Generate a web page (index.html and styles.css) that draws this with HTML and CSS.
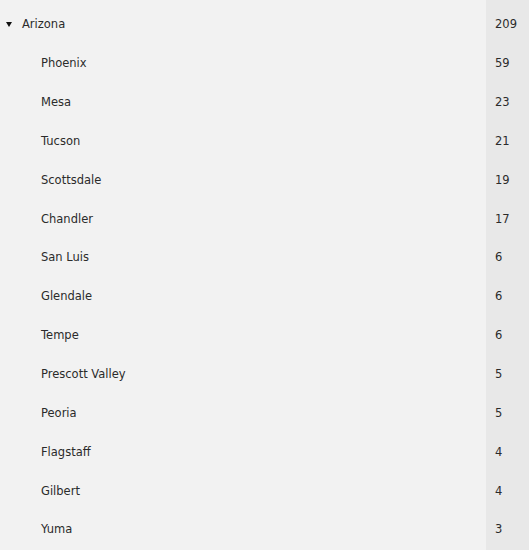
FILE: index.html
```html
<!DOCTYPE html>
<html>
<head>
<meta charset="utf-8">
<link rel="stylesheet" href="styles.css">
</head>
<body>
<div class="list">
  <div class="row state">
    <div class="name"><span class="caret"></span>Arizona</div>
    <div class="count">209</div>
  </div>
  <div class="row city"><div class="name">Phoenix</div><div class="count">59</div></div>
  <div class="row city"><div class="name">Mesa</div><div class="count">23</div></div>
  <div class="row city"><div class="name">Tucson</div><div class="count">21</div></div>
  <div class="row city"><div class="name">Scottsdale</div><div class="count">19</div></div>
  <div class="row city"><div class="name">Chandler</div><div class="count">17</div></div>
  <div class="row city"><div class="name">San Luis</div><div class="count">6</div></div>
  <div class="row city"><div class="name">Glendale</div><div class="count">6</div></div>
  <div class="row city"><div class="name">Tempe</div><div class="count">6</div></div>
  <div class="row city"><div class="name">Prescott Valley</div><div class="count">5</div></div>
  <div class="row city"><div class="name">Peoria</div><div class="count">5</div></div>
  <div class="row city"><div class="name">Flagstaff</div><div class="count">4</div></div>
  <div class="row city"><div class="name">Gilbert</div><div class="count">4</div></div>
  <div class="row city"><div class="name">Yuma</div><div class="count">3</div></div>
</div>
</body>
</html>
```
FILE: styles.css
```css
html, body {
  margin: 0;
  padding: 0;
  background: #f2f2f2;
}
body {
  font-family: "DejaVu Sans", sans-serif;
  font-size: 11.5px;
  color: #2b2b2b;
  height: 550px;
  overflow: hidden;
}
.list {
  display: flex;
  flex-direction: column;
  background: linear-gradient(to right, #f2f2f2 486px, #e8e8e8 486px);
  min-height: 550px;
}
.row {
  display: flex;
  align-items: center;
  height: 38.85px;
}
.row:first-child {
  margin-top: 5px;
}
.name {
  flex: 1;
  display: flex;
  align-items: center;
}
.state .name {
  padding-left: 5px;
}
.city .name {
  padding-left: 41px;
}
.caret {
  width: 0;
  height: 0;
  border-left: 3.5px solid transparent;
  border-right: 3.5px solid transparent;
  border-top: 5px solid #111;
  margin-right: 10px;
  margin-left: 1px;
}
.count {
  width: 34px;
  padding-left: 9px;
}
```
